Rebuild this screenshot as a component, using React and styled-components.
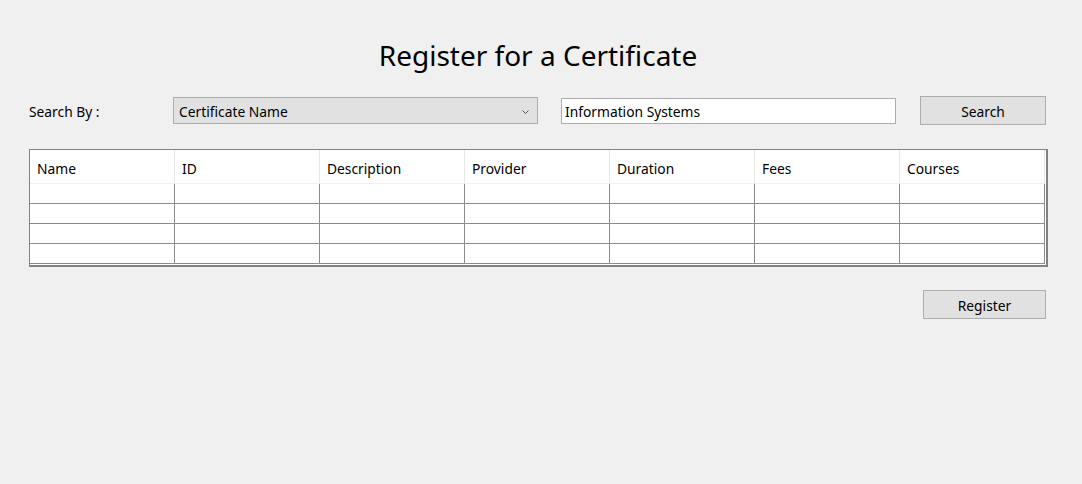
import React from "react";
import styled, { createGlobalStyle } from "styled-components";

const Global = createGlobalStyle`
  html, body { margin: 0; padding: 0; background: #f0f0f0; }
  body { font-family: "Noto Sans", "Open Sans", sans-serif; color: #000; }
  * { box-sizing: border-box; }
`;

const Page = styled.div`
  width: 1082px;
  height: 484px;
  background: #f0f0f0;
  padding: 35px 36px 0 29px;
  display: flex;
  flex-direction: column;
`;

const Title = styled.h1`
  margin: 0;
  height: 40px;
  line-height: 40px;
  font-size: 28px;
  font-weight: 400;
  text-align: center;
  padding-left: 1px;
  white-space: nowrap;
`;

const Toolbar = styled.div`
  margin-top: 21px;
  height: 29px;
  display: flex;
  align-items: center;
`;

const Label = styled.span`
  width: 144px;
  padding-top: 2px;
  font-size: 13.8px;
`;

const Combo = styled.div`
  width: 365px;
  height: 27px;
  border: 1px solid #adadad;
  background: #e1e1e1;
  display: flex;
  align-items: center;
  justify-content: space-between;
  padding: 2px 8px 0 5px;
  font-size: 13.8px;
`;

const TextBox = styled.div`
  margin-left: 23px;
  width: 335px;
  height: 26px;
  border: 1px solid #adadad;
  background: #fff;
  display: flex;
  align-items: center;
  padding: 2px 3px 0;
  font-size: 13.8px;
`;

const Button = styled.button`
  margin-left: ${(p) => p.$ml || "0"};
  width: ${(p) => p.$w}px;
  height: 29px;
  border: 1px solid #adadad;
  background: #e1e1e1;
  font-family: inherit;
  font-size: 13.8px;
  color: #000;
  padding: 2px 0 0;
`;

const Grid = styled.div`
  margin-top: 24px;
  width: 1019px;
  background: #fff;
  border-top: 1px solid #828282;
  border-left: 1px solid #828282;
  border-right: 2px solid #828282;
  border-bottom: 2px solid #828282;
  padding: 0 1px 1px 0;
`;

const Row = styled.div`
  display: grid;
  grid-template-columns: repeat(7, 145px);
`;

const HeadCell = styled.div`
  height: 34px;
  border-right: 1px solid #e6e6e6;
  border-bottom: 1px solid #f0f0f0;
  padding: 4px 7px 0;
  display: flex;
  align-items: center;
  font-size: 13.8px;
`;

const Cell = styled.div`
  height: 20px;
  border-right: 1px solid #8c8c8c;
  border-bottom: 1px solid #8c8c8c;
`;

const Footer = styled.div`
  margin-top: 23px;
  display: flex;
  justify-content: flex-end;
`;

const columns = ["Name", "ID", "Description", "Provider", "Duration", "Fees", "Courses"];

export default function App() {
  return (
    <>
      <Global />
      <Page>
        <Title>Register for a Certificate</Title>
        <Toolbar>
          <Label>Search By :</Label>
          <Combo>
            <span>Certificate Name</span>
            <svg width="7" height="4" viewBox="0 0 7 4">
              <path d="M0.5 0.5 L3.5 3.5 L6.5 0.5" fill="none" stroke="#555" strokeWidth="1" />
            </svg>
          </Combo>
          <TextBox>Information Systems</TextBox>
          <Button $ml="24px" $w={126}>Search</Button>
        </Toolbar>
        <Grid>
          <Row>
            {columns.map((c) => (
              <HeadCell key={c}>{c}</HeadCell>
            ))}
          </Row>
          {[0, 1, 2, 3].map((r) => (
            <Row key={r}>
              {columns.map((c) => (
                <Cell key={c} />
              ))}
            </Row>
          ))}
        </Grid>
        <Footer>
          <Button $w={123}>Register</Button>
        </Footer>
      </Page>
    </>
  );
}
